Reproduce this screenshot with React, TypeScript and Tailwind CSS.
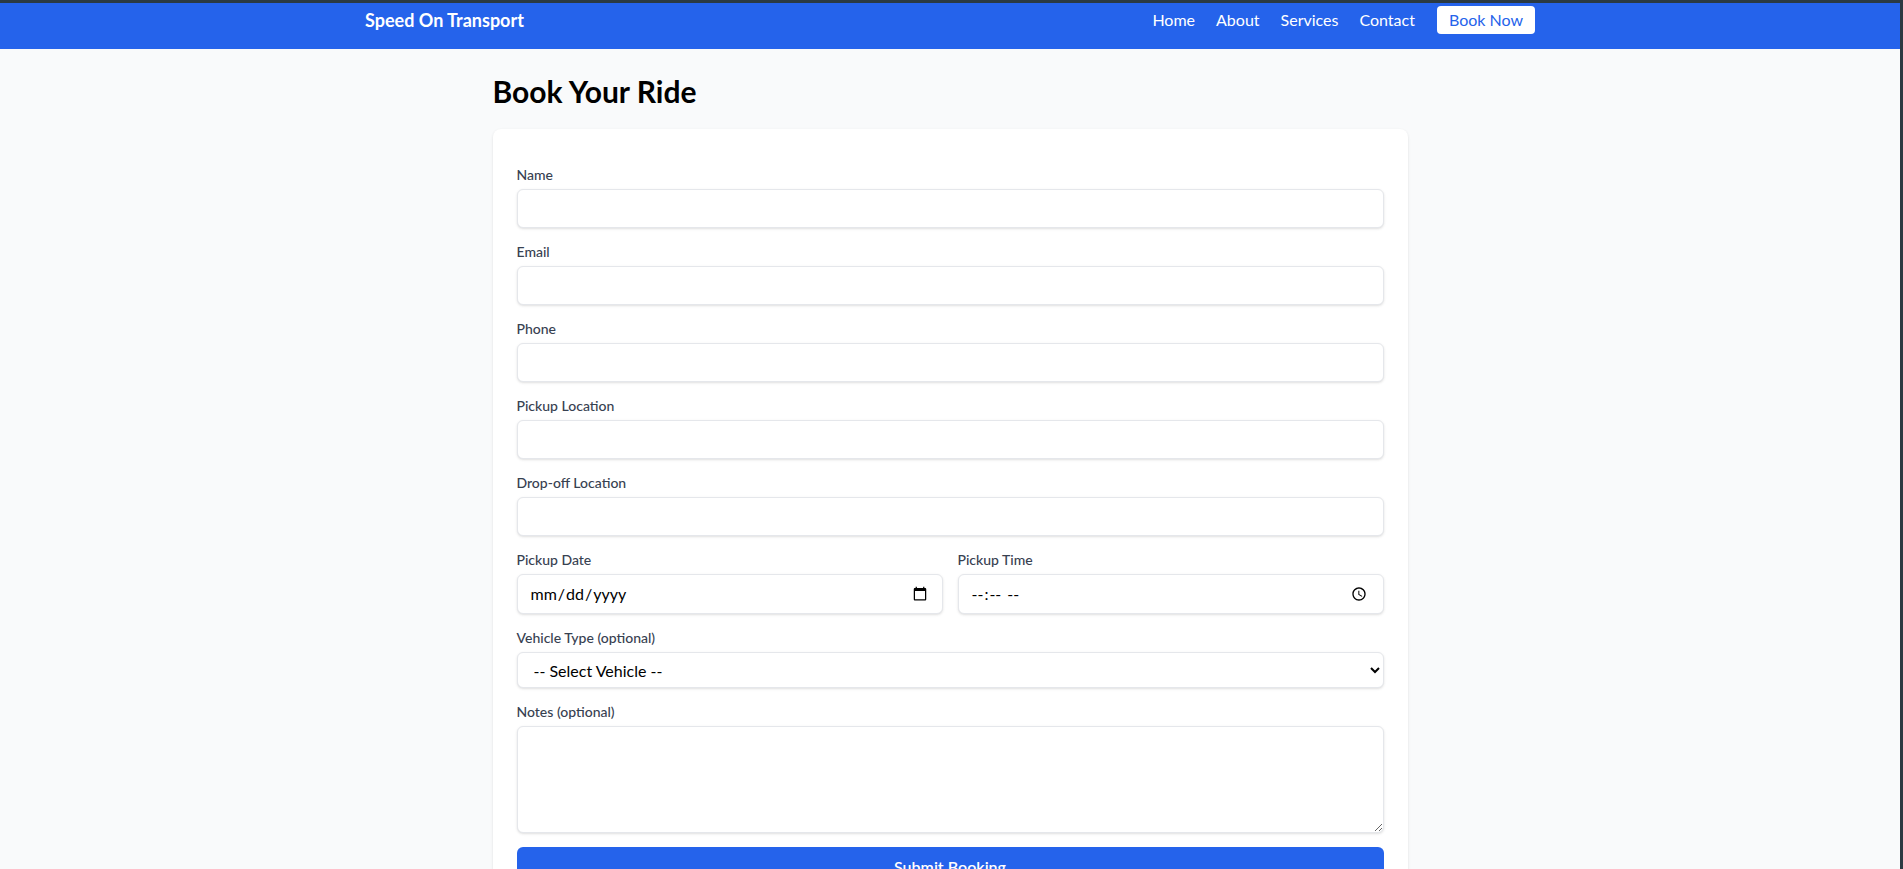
import { useState } from "react";

const navLinks = ["Home", "About", "Services", "Contact"];

const inputClass =
  "block w-full rounded-md border border-[#e5e7eb] bg-white px-3 text-base font-normal text-black shadow-sm outline-none focus:border-[#2563eb]";

interface FieldProps {
  label: string;
  children: React.ReactNode;
}

function Field({ label, children }: FieldProps) {
  return (
    <div>
      <label className="mb-1 block text-sm leading-5 font-medium text-[#374151]">{label}</label>
      {children}
    </div>
  );
}

export default function App() {
  const [vehicle, setVehicle] = useState("");

  return (
    <div
      className="min-h-screen border-t-[3px] border-r-[3px] border-[#2b3a42] bg-[#f9fafb]"
      style={{ fontFamily: 'Lato, "Noto Sans", sans-serif' }}
    >
      <header className="bg-[#2563eb] pt-[3px] pb-[15px] text-white">
        <div className="mx-auto flex h-7 max-w-[1170px] items-center justify-between">
          <span className="text-lg font-bold">Speed On Transport</span>
          <nav className="flex items-center gap-[21px] text-base">
            {navLinks.map((link) => (
              <a key={link} href="#" className="hover:underline">
                {link}
              </a>
            ))}
            <a href="#" className="ml-[1px] rounded bg-white px-3 py-0.5 leading-6 text-[#2563eb]">
              Book Now
            </a>
          </nav>
        </div>
      </header>

      <main className="mx-auto max-w-[915px] pt-6 pb-10">
        <h1 className="mb-5 text-3xl font-bold text-black">Book Your Ride</h1>

        <form
          className="flex flex-col gap-[14px] rounded-lg bg-white px-6 pt-9 pb-6 shadow"
          onSubmit={(e) => e.preventDefault()}
        >
          <Field label="Name">
            <input type="text" className={`${inputClass} h-[39px]`} />
          </Field>
          <Field label="Email">
            <input type="email" className={`${inputClass} h-[39px]`} />
          </Field>
          <Field label="Phone">
            <input type="tel" className={`${inputClass} h-[39px]`} />
          </Field>
          <Field label="Pickup Location">
            <input type="text" className={`${inputClass} h-[39px]`} />
          </Field>
          <Field label="Drop-off Location">
            <input type="text" className={`${inputClass} h-[39px]`} />
          </Field>

          <div className="grid grid-cols-2 gap-[15px]">
            <Field label="Pickup Date">
              <input type="date" className={`${inputClass} h-10`} />
            </Field>
            <Field label="Pickup Time">
              <input type="time" className={`${inputClass} h-10`} />
            </Field>
          </div>

          <Field label="Vehicle Type (optional)">
            <select
              value={vehicle}
              onChange={(e) => setVehicle(e.target.value)}
              className={`${inputClass} h-9`}
            >
              <option value="">-- Select Vehicle --</option>
              <option value="sedan">Sedan</option>
              <option value="suv">SUV</option>
              <option value="van">Van</option>
            </select>
          </Field>

          <Field label="Notes (optional)">
            <textarea className={`${inputClass} h-[107px] py-2`} />
          </Field>

          <button
            type="submit"
            className="w-full rounded-md bg-[#2563eb] py-2 text-base leading-6 font-semibold text-white hover:bg-[#1d4ed8]"
          >
            Submit Booking
          </button>
        </form>
      </main>
    </div>
  );
}
